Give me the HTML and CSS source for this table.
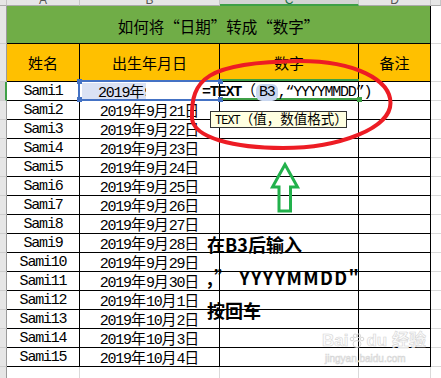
FILE: index.html
```html
<!DOCTYPE html>
<html lang="zh">
<head>
<meta charset="utf-8">
<title>如何将“日期”转成“数字”</title>
<link rel="stylesheet" href="styles.css">
</head>
<body>
<div class="sheet">
  <div class="grid">
    <div class="ch"></div>
    <div class="ch"><span>A</span></div>
    <div class="ch"><span>B</span></div>
    <div class="ch active"><span>C</span></div>
    <div class="ch"><span>D</span></div>
    <div class="ch"></div>

    <div class="rh"></div>
    <div class="title">如何将“日期”转成“数字”</div>
    <div class="e"></div>

    <div class="rh"></div>
    <div class="hd">姓名</div>
    <div class="hd">出生年月日</div>
    <div class="hd">数字</div>
    <div class="hd">备注</div>
    <div class="e"></div>

    <div class="rh on"></div><div class="c">Sami1</div><div class="c"><span class="hl">2019<i>年</i>9<i>月</i>20<i>日</i></span></div><div class="c"></div><div class="c"></div><div class="e"></div>
    <div class="rh"></div><div class="c">Sami2</div><div class="c">2019<i>年</i>9<i>月</i>21<i>日</i></div><div class="c"></div><div class="c"></div><div class="e"></div>
    <div class="rh"></div><div class="c">Sami3</div><div class="c">2019<i>年</i>9<i>月</i>22<i>日</i></div><div class="c"></div><div class="c"></div><div class="e"></div>
    <div class="rh"></div><div class="c">Sami4</div><div class="c">2019<i>年</i>9<i>月</i>23<i>日</i></div><div class="c"></div><div class="c"></div><div class="e"></div>
    <div class="rh"></div><div class="c">Sami5</div><div class="c">2019<i>年</i>9<i>月</i>24<i>日</i></div><div class="c"></div><div class="c"></div><div class="e"></div>
    <div class="rh"></div><div class="c">Sami6</div><div class="c">2019<i>年</i>9<i>月</i>25<i>日</i></div><div class="c"></div><div class="c"></div><div class="e"></div>
    <div class="rh"></div><div class="c">Sami7</div><div class="c">2019<i>年</i>9<i>月</i>26<i>日</i></div><div class="c"></div><div class="c"></div><div class="e"></div>
    <div class="rh"></div><div class="c">Sami8</div><div class="c">2019<i>年</i>9<i>月</i>27<i>日</i></div><div class="c"></div><div class="c"></div><div class="e"></div>
    <div class="rh"></div><div class="c">Sami9</div><div class="c">2019<i>年</i>9<i>月</i>28<i>日</i></div><div class="c"></div><div class="c"></div><div class="e"></div>
    <div class="rh"></div><div class="c">Sami10</div><div class="c">2019<i>年</i>9<i>月</i>29<i>日</i></div><div class="c"></div><div class="c"></div><div class="e"></div>
    <div class="rh"></div><div class="c">Sami11</div><div class="c">2019<i>年</i>9<i>月</i>30<i>日</i></div><div class="c"></div><div class="c"></div><div class="e"></div>
    <div class="rh"></div><div class="c">Sami12</div><div class="c">2019<i>年</i>10<i>月</i>1<i>日</i></div><div class="c"></div><div class="c"></div><div class="e"></div>
    <div class="rh"></div><div class="c">Sami13</div><div class="c">2019<i>年</i>10<i>月</i>2<i>日</i></div><div class="c"></div><div class="c"></div><div class="e"></div>
    <div class="rh"></div><div class="c">Sami14</div><div class="c">2019<i>年</i>10<i>月</i>3<i>日</i></div><div class="c"></div><div class="c"></div><div class="e"></div>
    <div class="rh"></div><div class="c">Sami15</div><div class="c">2019<i>年</i>10<i>月</i>4<i>日</i></div><div class="c"></div><div class="c"></div><div class="e"></div>

    <div class="rh"></div><div class="blank"></div><div class="blank"></div><div class="blank"></div><div class="blank"></div><div class="e"></div>
  </div>

  <div class="sel">
    <span class="hd-tl"></span><span class="hd-bl"></span><span class="hd-tr"></span><span class="hd-br"></span>
  </div>
  <div class="edit"><span class="handle"></span></div>
  <div class="formula"><b>=TEXT</b><i>（</i><span class="ref">B3</span>,“YYYYMMDD”)</div>
  <div class="tip">TEXT<i>（值，数值格式）</i></div>

  <svg class="marks" width="441" height="378" viewBox="0 0 441 378">
    <path d="M192,118 C191,80 205,62 300,61 C355,61 390.5,80 390.5,103 C390.5,128 340,148 283,148 C235,148 193,138 192,118 Z" fill="none" stroke="#ed1c24" stroke-width="4"/>
    <polygon points="285,164.5 272.5,187 279,187 279,211 290.5,211 290.5,187 297.5,187" fill="none" stroke="#22b14c" stroke-width="3"/>
  </svg>

  <div class="note">
    <p>在B3后输入</p>
    <p class="wide">,” YYYYMMDD"</p>
    <p>按回车</p>
  </div>

  <div class="wm">
    <div class="wm-top">Bai<svg class="paw" width="16" height="16" viewBox="0 0 16 16"><g fill="none" stroke="#d6d6d6" stroke-width="1"><ellipse cx="8" cy="11" rx="4" ry="3.5"/><circle cx="3" cy="6" r="1.8"/><circle cx="6.2" cy="2.8" r="1.8"/><circle cx="9.8" cy="2.8" r="1.8"/><circle cx="13" cy="6" r="1.8"/></g></svg>du 经验</div>
    <div class="wm-url">jingyan.baidu.com</div>
  </div>
</div>
</body>
</html>
```

FILE: styles.css
```css
* { box-sizing: border-box; margin: 0; padding: 0; }
html, body { width: 441px; height: 378px; overflow: hidden; background: #fff; }
body {
  font-family: "Liberation Mono", "Courier New", monospace;
  font-size: 15px;
  letter-spacing: -1.2px;
  color: #000;
}
.sheet { position: relative; width: 441px; height: 378px; overflow: hidden; }

.grid {
  display: grid;
  grid-template-columns: 7px 73px 140px 139px 72px 10px;
  grid-template-rows: 6px 38px 38px repeat(16, 19px);
}

.ch {
  background: #e6e6e6;
  border-right: 1px solid #c6c6c6;
  border-bottom: 1px solid #ababab;
  overflow: hidden;
  text-align: center;
  font-family: "Liberation Sans", sans-serif;
  font-size: 12px;
  letter-spacing: 0;
  color: #555;
}
.ch span { display: block; line-height: 12px; margin-top: -6px; }
.ch.active { background: #d4d4d4; border-bottom: 2px solid #3fa047; color: #217346; }

.rh { background: #e6e6e6; border-right: 1px solid #9b9b9b; border-bottom: 1px solid #cdcdcd; }
.rh.on { background: #d4d4d4; border-right: 2px solid #3fa047; }

.title {
  grid-column: span 4;
  background: #70ad47;
  border-right: 1px solid #000;
  border-bottom: 1px solid #000;
  display: flex; align-items: center; justify-content: center;
  padding-top: 2px;
  font-family: "Noto Sans CJK SC", sans-serif;
  font-size: 15.5px;
  letter-spacing: 0;
}
.hd {
  background: #ffc000;
  border-right: 1px solid #000;
  border-bottom: 1px solid #000;
  display: flex; align-items: center; justify-content: center;
  font-family: "Noto Sans CJK SC", sans-serif;
  font-size: 15px;
  letter-spacing: 0;
}
.c {
  border-right: 1px solid #000;
  border-bottom: 1px solid #000;
  text-align: center;
  line-height: 18px;
  padding-top: 1px;
  white-space: nowrap;
}
i { font-style: normal; font-family: "Noto Sans CJK SC", sans-serif; font-size: 15px; line-height: 1; letter-spacing: 0; }
.e { border-bottom: 1px solid #d9d9d9; }
.blank { border-right: 1px solid #d9d9d9; border-bottom: 1px solid #d9d9d9; }

.hl {
  display: block;
  width: 64px; height: 16px;
  margin: 0 0 0 2px;
  padding-left: 16px;
  background: #dae2f4;
  overflow: hidden;
  text-align: left;
  line-height: 16px;
}

.sel {
  position: absolute; left: 78px; top: 80px; width: 142px; height: 21px;
  border: 2px solid #4472c4; border-right: none;
}
.sel span { position: absolute; width: 5px; height: 5px; background: #4472c4; }
.sel .hd-tl { left: -3px; top: -3px; }
.sel .hd-bl { left: -3px; bottom: -3px; }
.sel .hd-tr { right: -3px; top: -3px; }
.sel .hd-br { right: -3px; bottom: -3px; }

.edit {
  position: absolute; left: 222px; top: 79px; width: 137px; height: 21px;
  border-top: 2px solid #3fa047; border-bottom: 2px solid #3fa047;
}
.edit .handle { position: absolute; right: -3px; bottom: -4px; width: 5px; height: 5px; background: #3fa047; }

.formula { position: absolute; left: 202px; top: 82px; line-height: 18px; white-space: nowrap; }
.formula b { font-weight: bold; }
.formula .ref { background: #c9d7f0; border-radius: 6px; padding: 0 3px 0 3px; }

.tip {
  position: absolute; left: 210px; top: 111px; width: 137px; height: 17px;
  background: #ffffe1; border: 1px solid #333;
  font-size: 12px; letter-spacing: -1px; line-height: 15px; padding-left: 4px; white-space: nowrap;
}
.tip i { font-size: 13.5px; }

.marks { position: absolute; left: 0; top: 0; }

.note {
  position: absolute; left: 207px; top: 228px;
  font-family: "Noto Sans CJK SC", sans-serif;
  font-weight: bold; font-size: 18px; line-height: 33px; letter-spacing: 0; white-space: nowrap;
}
.note .wide { letter-spacing: 1.4px; }

.wm {
  position: absolute; left: 322px; top: 331px;
  color: #fbfbfb; -webkit-text-stroke: 0.6px #d6d6d6;
  font-family: "Liberation Sans", "Noto Sans CJK SC", sans-serif;
  letter-spacing: 0;
}
.wm-top { font-size: 17px; font-weight: bold; line-height: 20px; display: flex; align-items: center; }
.paw { margin: 0 1px; }
.wm-url { font-size: 10px; line-height: 12px; margin-top: 2px; padding-left: 3px; }
```
